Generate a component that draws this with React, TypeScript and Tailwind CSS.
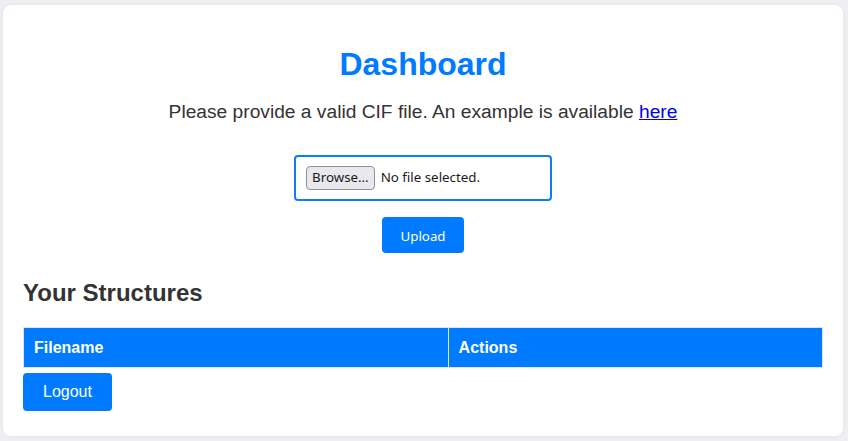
import React from "react";

export default function App() {
  return (
    <div className="min-h-[441px] bg-[#efeff3] pt-[5px] pb-[5px] pl-[3px] pr-[5px]" style={{ fontFamily: '"Liberation Sans", Arial, sans-serif' }}>
      <div className="bg-white rounded-[8px] shadow-[0_0_4px_rgba(0,0,0,0.06)] px-[20px] pt-[20px] pb-[25px] h-[431px]">
        <h1 className="text-center text-[32px] leading-[37px] font-bold text-[#007bff] mt-[21px]">Dashboard</h1>
        <p className="text-center text-[19.2px] leading-[22px] text-[#333333] mt-[18px]">
          Please provide a valid CIF file. An example is available{" "}
          <a href="#" className="text-[#0000ee] underline">here</a>
        </p>
        <div className="flex flex-col items-center mt-[32px]">
          <div className="w-[258px] h-[46px] border-2 border-[#0a7ff0] rounded-[4px] flex items-center pl-[10px]" style={{ fontFamily: '"Noto Sans", "DejaVu Sans", sans-serif' }}>
            <span className="h-[24px] px-[5px] flex items-center bg-[#e9e9ed] border border-[#8f8f9d] rounded-[4px] text-[13.33px] text-[#1b1b1b]">Browse…</span>
            <span className="ml-[6px] text-[13.33px] text-[#1b1b1b]">No file selected.</span>
          </div>
          <button className="mt-[16px] w-[82px] h-[36px] pt-[3px] bg-[#007bff] text-white rounded-[4px] text-[13.33px]" style={{ fontFamily: '"Noto Sans", "DejaVu Sans", sans-serif' }}>Upload</button>
        </div>
        <h2 className="text-[24px] leading-[28px] font-bold text-[#333333] mt-[26px]">Your Structures</h2>
        <table className="w-full mt-[20px] border-collapse">
          <thead>
            <tr>
              <th className="bg-[#007bff] text-white text-left text-[16px] leading-[19px] font-bold px-[10px] py-[10px] border border-[#dde6f0]">Filename</th>
              <th className="bg-[#007bff] text-white text-left text-[16px] leading-[19px] font-bold px-[10px] py-[10px] border border-[#dde6f0]">Actions</th>
            </tr>
          </thead>
        </table>
        <button className="mt-[5px] h-[38px] px-[20px] bg-[#007bff] text-white rounded-[4px] text-[16px]">Logout</button>
      </div>
    </div>
  );
}
